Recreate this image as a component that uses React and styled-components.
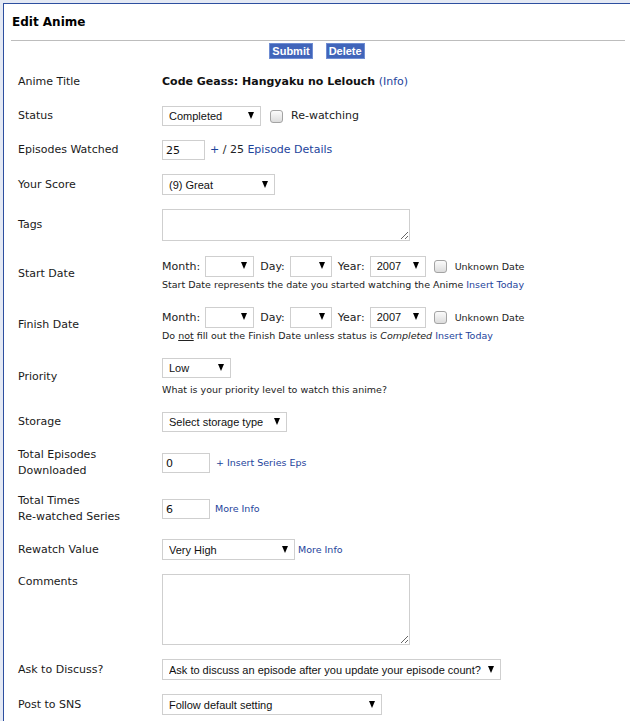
import React from 'react';
import styled, { createGlobalStyle } from 'styled-components';

const GlobalStyle = createGlobalStyle`
  html, body {
    margin: 0;
    padding: 0;
    background: #e4e9f4;
  }
  body {
    font-family: "DejaVu Sans", Verdana, sans-serif;
    font-size: 11px;
    color: #222;
  }
`;

const Page = styled.div`
  padding: 3px 0 0 3px;
  min-height: 100vh;
  box-sizing: border-box;
  display: flex;
`;

const Frame = styled.div`
  flex: 1;
  background: #fff;
  border-top: 1px solid #2d4f9f;
  border-left: 1px solid #2d4f9f;
`;

const Header = styled.h2`
  margin: 0 5px 0 7px;
  padding: 11px 0 10px 1px;
  font-size: 12px;
  line-height: 15px;
  font-weight: bold;
  color: #000;
  border-bottom: 1px solid #bdbdbd;
`;

const ButtonBar = styled.div`
  display: flex;
  justify-content: center;
  gap: 13px;
  padding: 2px 0 6px;
`;

const Button = styled.button`
  height: 16px;
  padding: 0 2px;
  margin: 0;
  font: bold 11px "Liberation Sans", Arial, sans-serif;
  line-height: 14px;
  color: #fff;
  background: #4165ba;
  border: 1px solid #6f8dd3;
  border-radius: 0;
`;

const Form = styled.div`
  padding: 0 14px;
`;

const Row = styled.div`
  display: grid;
  grid-template-columns: 144px 1fr;
  align-items: center;
  padding: 7px 0;
`;

const Label = styled.div`
  line-height: 16px;
  color: #1a1a1a;
  align-self: ${(p) => (p.$top ? 'start' : 'center')};
`;

const Field = styled.div`
  display: flex;
  align-items: center;
  min-height: ${(p) => p.$min || 0}px;
  line-height: 16px;
`;

const Stack = styled.div`
  display: flex;
  flex-direction: column;
  align-items: flex-start;
`;

const Line = styled.div`
  display: flex;
  align-items: center;
  min-height: 22px;
`;

const Note = styled.div`
  font-size: 9.5px;
  line-height: 15px;
  margin-top: ${(p) => p.$mt || 0}px;
  color: #222;
`;

const Title = styled.b`
  color: #111;
`;

const Link = styled.a`
  color: #1d439b;
  text-decoration: none;
  cursor: pointer;
  font-size: ${(p) => (p.$small ? '9.5px' : 'inherit')};
`;

const Small = styled.span`
  font-size: 9.5px;
`;

const Gap = styled.span`
  display: inline-block;
  flex: none;
  width: ${(p) => p.$w}px;
`;

const SelectWrap = styled.span`
  position: relative;
  display: inline-flex;
  flex: none;
  width: ${(p) => p.$w}px;
  height: ${(p) => p.$h || 21}px;

  &::after {
    content: '';
    position: absolute;
    right: 7px;
    top: 50%;
    margin-top: -4px;
    border-left: 3.5px solid transparent;
    border-right: 3.5px solid transparent;
    border-top: 7px solid #000;
    pointer-events: none;
  }
`;

const SelectBox = styled.select`
  appearance: none;
  -webkit-appearance: none;
  width: 100%;
  height: 100%;
  box-sizing: border-box;
  margin: 0;
  padding: 0 14px 0 6px;
  border: 1px solid #cfcfcf;
  border-radius: 0;
  background: #fff;
  font: 11px "Liberation Sans", Arial, sans-serif;
  color: #111;
`;

const TextInput = styled.input`
  box-sizing: border-box;
  width: ${(p) => p.$w}px;
  height: 20px;
  margin: 0;
  padding: 0 3px;
  border: 1px solid #cfcfcf;
  border-radius: 0;
  font: 11px "DejaVu Sans", Verdana, sans-serif;
  color: #111;
  flex: none;
`;

const Check = styled.input.attrs({ type: 'checkbox' })`
  appearance: none;
  -webkit-appearance: none;
  flex: none;
  width: 13px;
  height: 13px;
  margin: 0;
  border: 1px solid #a3a3a3;
  border-radius: 3px;
  background: linear-gradient(#fbfbfb, #dcdcdc);
`;

const TextArea = styled.textarea`
  display: block;
  box-sizing: border-box;
  width: 248px;
  height: ${(p) => p.$h}px;
  margin: 0;
  border: 1px solid #cfcfcf;
  border-radius: 0;
  resize: both;
`;

const Select = ({ w, h, value }) => (
  <SelectWrap $w={w} $h={h}>
    <SelectBox defaultValue={value}>
      <option value={value}>{value}</option>
    </SelectBox>
  </SelectWrap>
);

const DateLine = () => (
  <Line>
    Month:
    <Gap $w={5} />
    <Select w={49} value="" />
    <Gap $w={6} />
    Day:
    <Gap $w={5} />
    <Select w={42} value="" />
    <Gap $w={6} />
    Year:
    <Gap $w={5} />
    <Select w={56} value="2007" />
    <Gap $w={8} />
    <Check />
    <Gap $w={8} />
    <Small>Unknown Date</Small>
  </Line>
);

export default function App() {
  return (
    <>
      <GlobalStyle />
      <Page>
        <Frame>
          <Header>Edit Anime</Header>
          <ButtonBar>
            <Button>Submit</Button>
            <Button>Delete</Button>
          </ButtonBar>
          <Form>
            <Row>
              <Label>Anime Title</Label>
              <Field $min={20}>
                <Title>Code Geass: Hangyaku no Lelouch</Title>
                &nbsp;<Link>(Info)</Link>
              </Field>
            </Row>
            <Row>
              <Label>Status</Label>
              <Field>
                <Select w={99} h={20} value="Completed" />
                <Gap $w={9} />
                <Check />
                <Gap $w={8} />
                Re-watching
              </Field>
            </Row>
            <Row>
              <Label>Episodes Watched</Label>
              <Field>
                <TextInput $w={43} defaultValue="25" />
                <Gap $w={5} />
                <Link>+</Link>&nbsp;/ 25&nbsp;<Link>Episode Details</Link>
              </Field>
            </Row>
            <Row>
              <Label>Your Score</Label>
              <Field>
                <Select w={113} value="(9) Great" />
              </Field>
            </Row>
            <Row>
              <Label>Tags</Label>
              <Field>
                <TextArea $h={32} />
              </Field>
            </Row>
            <Row>
              <Label>Start Date</Label>
              <Stack>
                <DateLine />
                <Note>
                  Start Date represents the date you started watching the Anime{' '}
                  <Link>Insert Today</Link>
                </Note>
              </Stack>
            </Row>
            <Row>
              <Label>Finish Date</Label>
              <Stack>
                <DateLine />
                <Note>
                  Do <u>not</u> fill out the Finish Date unless status is <i>Completed</i>{' '}
                  <Link>Insert Today</Link>
                </Note>
              </Stack>
            </Row>
            <Row>
              <Label>Priority</Label>
              <Stack>
                <Line>
                  <Select w={69} h={20} value="Low" />
                </Line>
                <Note $mt={3}>What is your priority level to watch this anime?</Note>
              </Stack>
            </Row>
            <Row>
              <Label>Storage</Label>
              <Field $min={22}>
                <Select w={125} h={20} value="Select storage type" />
              </Field>
            </Row>
            <Row>
              <Label>
                Total Episodes
                <br />
                Downloaded
              </Label>
              <Field>
                <TextInput $w={48} defaultValue="0" />
                <Gap $w={6} />
                <Link $small>+ Insert Series Eps</Link>
              </Field>
            </Row>
            <Row>
              <Label>
                Total Times
                <br />
                Re-watched Series
              </Label>
              <Field>
                <TextInput $w={48} defaultValue="6" />
                <Gap $w={5} />
                <Link $small>More Info</Link>
              </Field>
            </Row>
            <Row>
              <Label>Rewatch Value</Label>
              <Field>
                <Select w={133} value="Very High" />
                <Gap $w={3} />
                <Link $small>More Info</Link>
              </Field>
            </Row>
            <Row>
              <Label $top>Comments</Label>
              <Field>
                <TextArea $h={71} />
              </Field>
            </Row>
            <Row>
              <Label>Ask to Discuss?</Label>
              <Field>
                <Select
                  w={339}
                  value="Ask to discuss an episode after you update your episode count?"
                />
              </Field>
            </Row>
            <Row>
              <Label>Post to SNS</Label>
              <Field>
                <Select w={220} value="Follow default setting" />
              </Field>
            </Row>
          </Form>
        </Frame>
      </Page>
    </>
  );
}
